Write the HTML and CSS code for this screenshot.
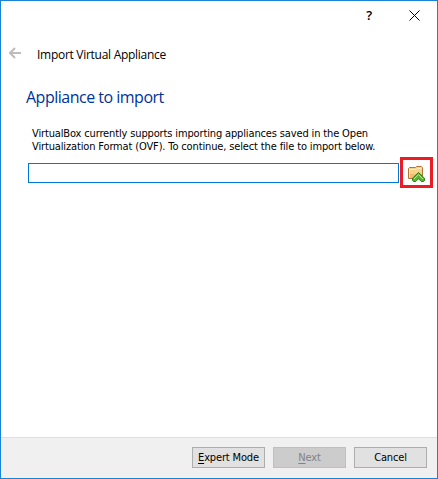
FILE: index.html
```html
<!DOCTYPE html>
<html lang="en">
<head>
<meta charset="utf-8">
<title>Import Virtual Appliance</title>
<link rel="stylesheet" href="styles.css">
</head>
<body>
<div class="window">
  <header class="titlebar">
    <span class="help">?</span>
    <svg class="close" width="11" height="11" viewBox="0 0 11 11"><path d="M.5 .5 10.5 10.5M10.5 .5 .5 10.5"/></svg>
  </header>
  <div class="nav">
    <svg class="back" width="12" height="12" viewBox="0 0 12 12"><path d="M12 6H1M6 1 1 6 6 11"/></svg>
    <span class="caption">Import Virtual Appliance</span>
  </div>
  <main class="page">
    <h1>Appliance to import</h1>
    <p>VirtualBox currently supports importing appliances saved in the Open<br>Virtualization Format (OVF). To continue, select the file to import below.</p>
    <div class="picker">
      <input class="path" type="text">
      <div class="browse">
        <svg width="17" height="16" viewBox="0 0 17 16">
          <path d="M.5 12.5V2.5L1.5 1.5H7.5L8.5 .5H13.5L14.5 1.5V12.5Z" fill="#f6d28b" stroke="#b87333"/>
          <path d="M1.5 11.5V3.5H8.5L9.5 2.5H13.5" fill="none" stroke="#fff0c8"/>
          <path d="M2 8H14V12H2Z" fill="#f0bd6c"/>
          <path d="M10.5 6.5 16.5 12.3V14.5L15.5 15.5H13.3L10.5 12.7 7.7 15.5H5.5L4.5 14.5V12.3Z" fill="#5cb531" stroke="#2c7a1c"/>
          <path d="M6 13 10.5 8.5 15 13" fill="none" stroke="#b5ec83"/>
        </svg>
      </div>
    </div>
  </main>
  <footer class="footer">
    <button class="btn expert"><span><u>E</u>xpert Mode</span></button>
    <button class="btn next" disabled><span><u>N</u>ext</span></button>
    <button class="btn cancel"><span>Cancel</span></button>
  </footer>
</div>
</body>
</html>
```
FILE: styles.css
```css
* { box-sizing: border-box; }
body { margin: 0; }
.window {
  width: 438px;
  height: 479px;
  border: 1px solid #1883d7;
  background: #fff;
  display: flex;
  flex-direction: column;
  font-family: "DejaVu Sans Condensed", "DejaVu Sans", sans-serif;
  font-stretch: condensed;
  font-size: 11px;
  letter-spacing: -0.14px;
  color: #000;
}
.titlebar {
  height: 29px;
  display: flex;
  justify-content: flex-end;
  align-items: center;
  padding-right: 17px;
  gap: 37px;
}
.help { font: 600 13px/14px "Open Sans", sans-serif; margin-bottom: 2px; }
.close { fill: none; stroke: #000; stroke-width: 1; }
.nav {
  height: 46px;
  display: flex;
  align-items: center;
  padding-left: 8px;
  gap: 16px;
}
.back { fill: none; stroke: #bdbdbd; stroke-width: 2; }
.caption {
  font: 12px/16px "Open Sans", sans-serif;
  letter-spacing: -0.28px;
  margin-top: 4px;
  white-space: nowrap;
}
.page { flex: 1; padding: 10px 4px 0 25px; }
h1 {
  margin: 0;
  font: 16px/22px "Open Sans", sans-serif;
  letter-spacing: -0.5px;
  color: #003399;
  white-space: nowrap;
}
p { margin: 19px 0 0 6px; line-height: 13px; white-space: nowrap; }
.picker { display: flex; align-items: center; margin: 4px 0 0 2px; }
.path {
  width: 371px;
  height: 20px;
  padding: 0 3px;
  border: 1px solid #0078d7;
  border-radius: 0;
  background: #fff;
  outline: none;
  font: inherit;
}
.browse {
  width: 33px;
  height: 31px;
  margin-left: 1px;
  border: 3px solid #ed1c24;
  display: flex;
  align-items: center;
  justify-content: center;
}
.browse svg { margin-top: 3px; }
.footer {
  height: 41px;
  border-top: 1px solid #dfdfdf;
  background: #f0f0f0;
  display: flex;
  align-items: flex-start;
  justify-content: flex-end;
  padding: 9px 10px 0 0;
  gap: 8px;
}
.btn {
  width: 73px;
  height: 21px;
  padding: 0;
  border: 1px solid #adadad;
  background: #e1e1e1;
  color: #000;
  font: inherit;
  letter-spacing: -0.15px;
  line-height: 17px;
  white-space: nowrap;
}
.btn u { text-underline-offset: 2px; text-decoration-thickness: 1px; text-decoration-skip-ink: none; }
.btn:disabled { background: #ccc; border-color: #bfbfbf; color: #838383; }
```
